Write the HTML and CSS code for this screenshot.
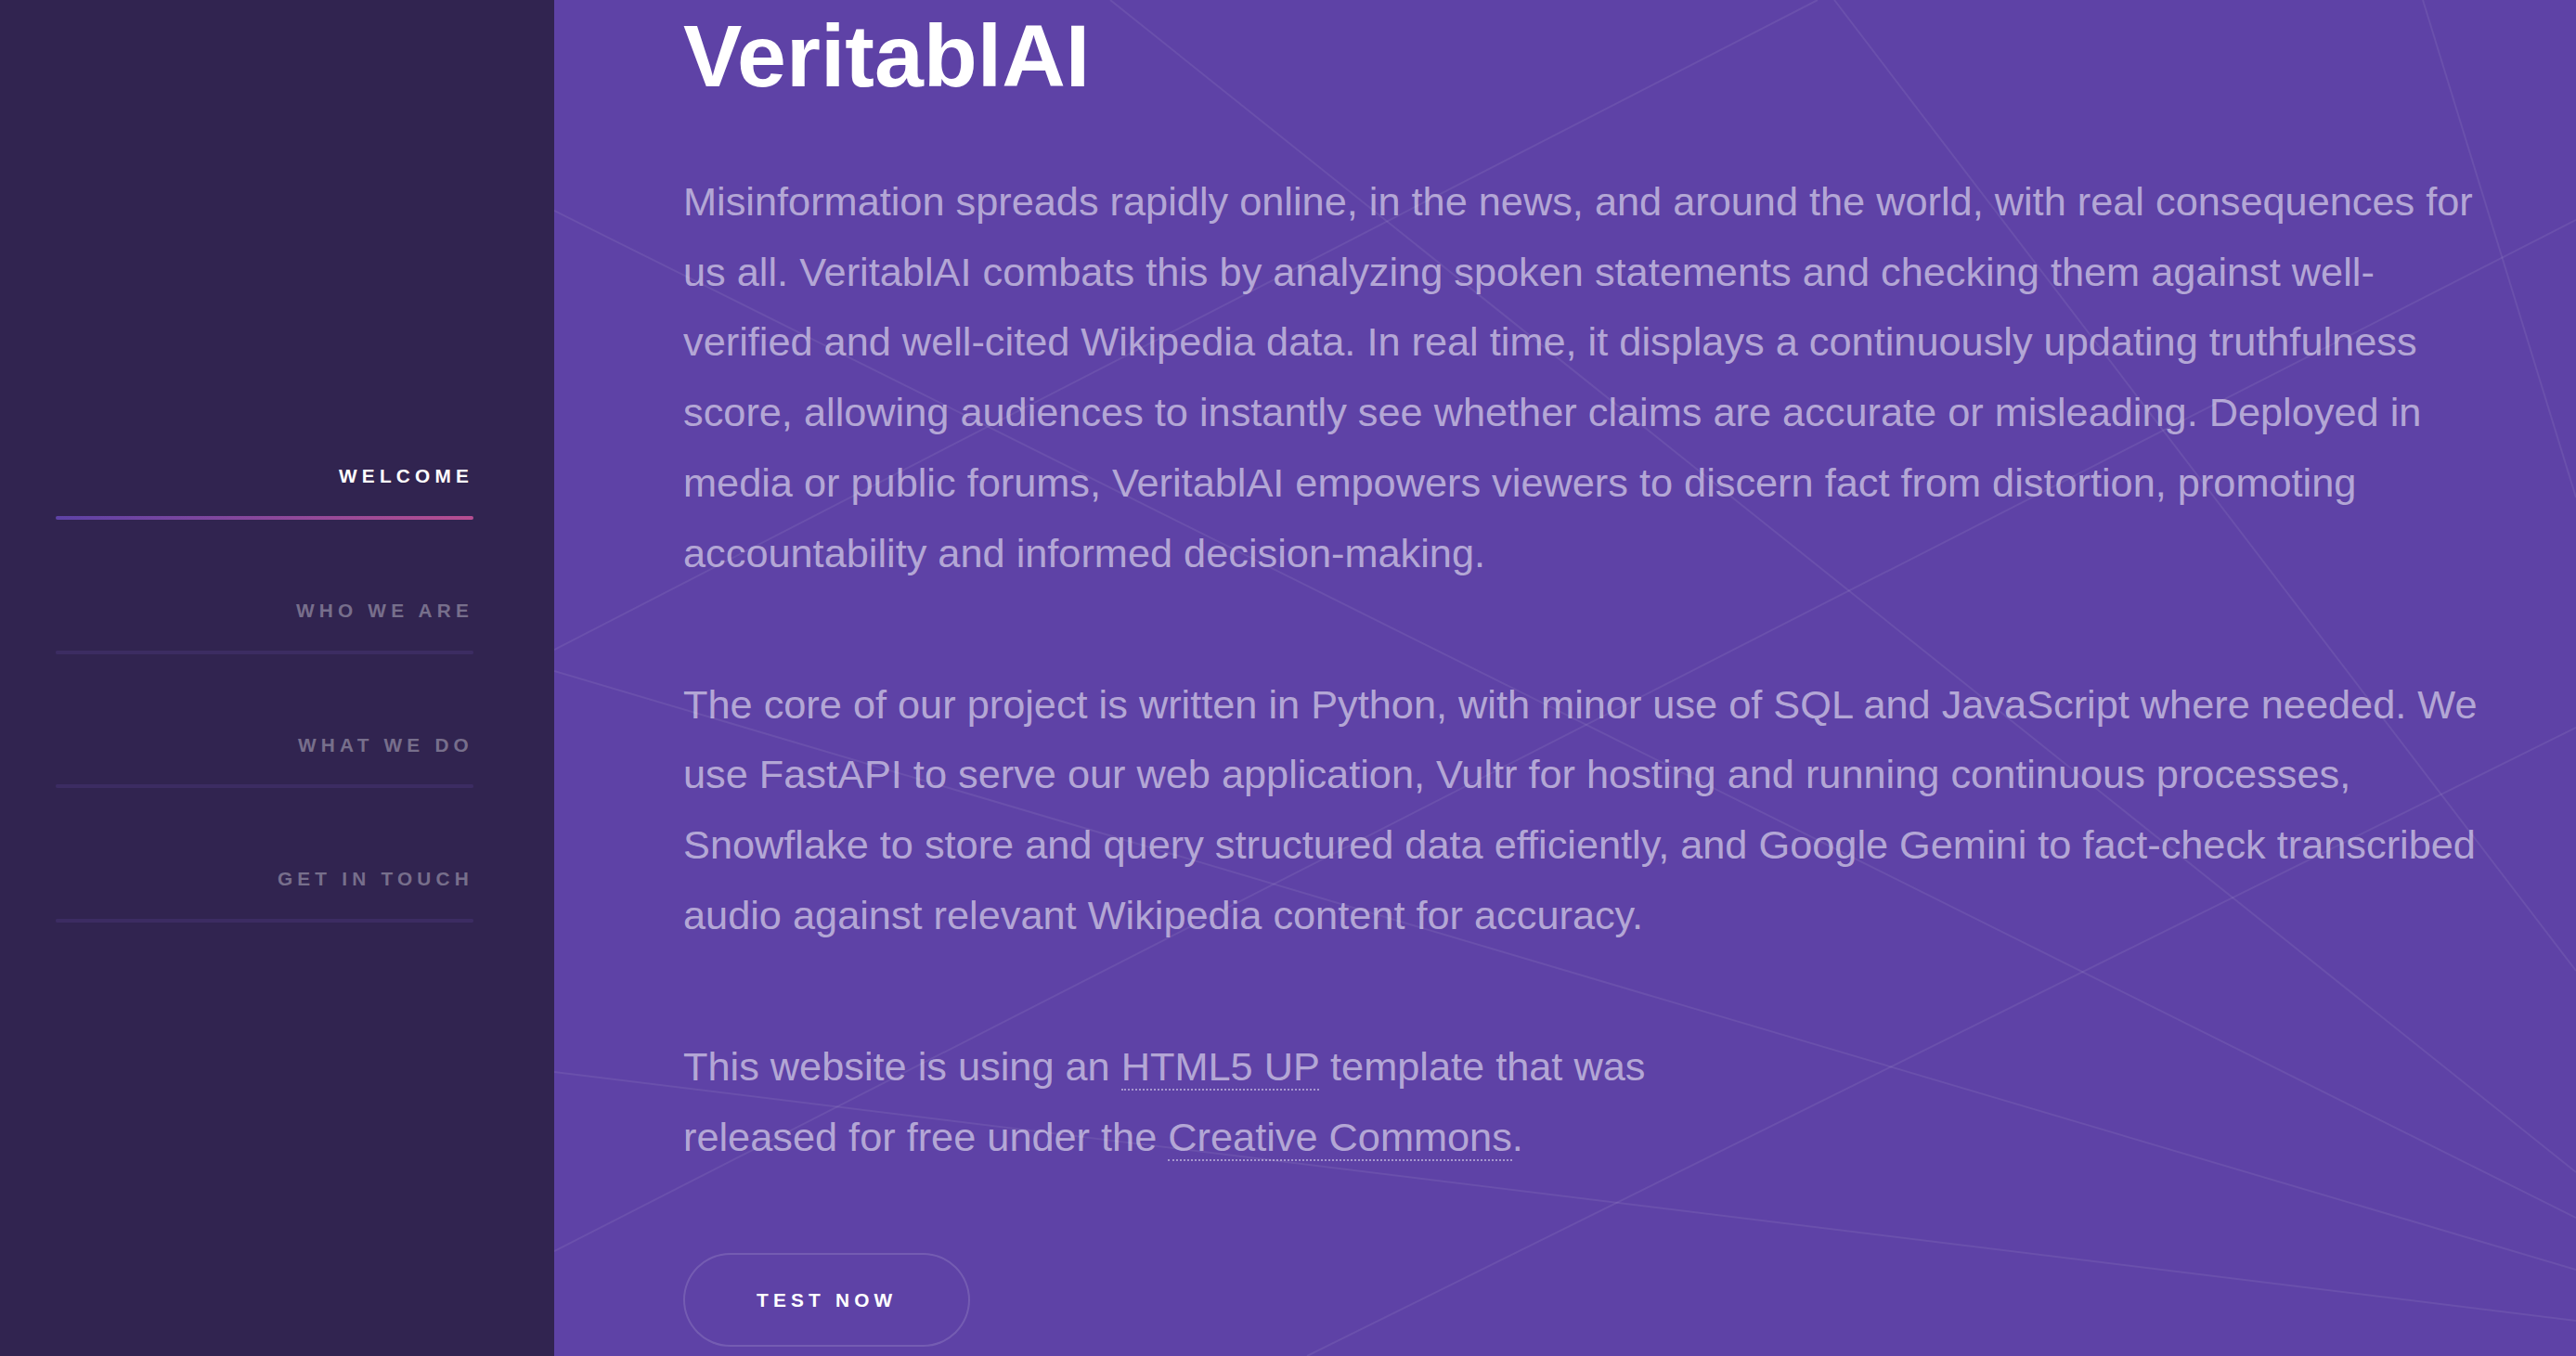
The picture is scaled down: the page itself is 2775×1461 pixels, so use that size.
FILE: index.html
```html
<!DOCTYPE html>
<html lang="en">
<head>
<meta charset="utf-8">
<title>VeritablAI</title>
<link rel="stylesheet" href="styles.css">
</head>
<body>
<div class="page">
  <aside class="sidebar">
    <nav class="nav">
      <ul>
        <li><a href="#intro" class="active">Welcome</a></li>
        <li><a href="#one">Who we are</a></li>
        <li><a href="#two">What we do</a></li>
        <li><a href="#three">Get in touch</a></li>
      </ul>
    </nav>
  </aside>
  <main class="intro" id="intro">
    <svg class="bg-lines" viewBox="597 0 2178 1461" preserveAspectRatio="none" aria-hidden="true">
      <g stroke="rgba(255,255,255,0.075)" stroke-width="2" fill="none">
        <line x1="1976" y1="0" x2="2775" y2="1046"/>
        <line x1="2610" y1="0" x2="2775" y2="536"/>
        <line x1="2775" y1="237" x2="597" y2="1348"/>
        <line x1="597" y1="700" x2="1958" y2="0"/>
        <line x1="597" y1="723" x2="2775" y2="1368"/>
        <line x1="597" y1="1155" x2="2775" y2="1423"/>
        <line x1="2775" y1="784" x2="1408" y2="1461"/>
        <line x1="1196" y1="0" x2="2775" y2="1263"/>
        <line x1="597" y1="227" x2="2775" y2="1312"/>
      </g>
    </svg>
    <div class="inner">
      <h1 class="title">VeritablAI</h1>
      <p class="text">Misinformation spreads rapidly online, in the news, and around the world, with real consequences for us all. VeritablAI combats this by analyzing spoken statements and checking them against well-verified and well-cited Wikipedia data. In real time, it displays a continuously updating truthfulness score, allowing audiences to instantly see whether claims are accurate or misleading. Deployed in media or public forums, VeritablAI empowers viewers to discern fact from distortion, promoting accountability and informed decision-making.</p>
      <p class="text">The core of our project is written in Python, with minor use of SQL and JavaScript where needed. We use FastAPI to serve our web application, Vultr for hosting and running continuous processes, Snowflake to store and query structured data efficiently, and Google Gemini to fact-check transcribed audio against relevant Wikipedia content for accuracy.</p>
      <p class="text">This website is using an <a class="link" href="#">HTML5 UP</a> template that was<br>released for free under the <a class="link" href="#">Creative Commons</a>.</p>
      <a class="button" href="#">Test now</a>
    </div>
  </main>
</div>
</body>
</html>
```

FILE: styles.css
```css
html, body {
  margin: 0;
  padding: 0;
  height: 100%;
  overflow: hidden;
}

body {
  background: #5e42a6;
  font-family: "Liberation Sans", Arial, Helvetica, sans-serif;
}

.page {
  display: flex;
  height: 100vh;
}

.sidebar {
  flex: none;
  width: 597px;
  box-sizing: border-box;
  background: #312450;
  display: flex;
  flex-direction: column;
  justify-content: center;
  padding: 0 87px 0 60px;
}

.nav ul {
  list-style: none;
  margin: 0;
  padding: 0;
}

.nav li {
  margin: 52px 0 0 0;
}

.nav li:first-child {
  margin-top: 0;
}

.nav a {
  display: block;
  position: relative;
  font-size: 20.8px;
  font-weight: bold;
  letter-spacing: 0.25em;
  line-height: 1.75;
  padding: 1.35em 0;
  text-align: right;
  text-transform: uppercase;
  text-decoration: none;
  color: rgba(255, 255, 255, 0.35);
}

.nav a::before,
.nav a::after {
  content: "";
  position: absolute;
  right: 0;
  bottom: 0;
  width: 100%;
  height: 4px;
  border-radius: 4px;
  background: #3c2c62;
}

.nav a.active {
  color: #ffffff;
}

.nav a.active::after {
  background: linear-gradient(to right, #5e42a6, #b74e91);
}

.intro {
  flex: 1;
  position: relative;
  box-sizing: border-box;
  padding: 0 86px 0 139px;
  overflow: hidden;
}

.bg-lines {
  position: absolute;
  left: 0;
  top: 0;
  width: 100%;
  height: 100%;
}

.inner {
  position: relative;
}

.title {
  margin: 0 0 59px 0;
  font-size: 95px;
  line-height: 1.27;
  font-weight: bold;
  color: #ffffff;
}

.text {
  margin: 0 0 2em 0;
  font-size: 43.3px;
  line-height: 1.753;
  color: rgba(255, 255, 255, 0.55);
}

.link {
  color: inherit;
  text-decoration: none;
  border-bottom: 2px dotted rgba(255, 255, 255, 0.45);
}

.button {
  display: inline-block;
  height: 101px;
  line-height: 101px;
  padding: 0 79px;
  border-radius: 51px;
  box-shadow: inset 0 0 0 2px rgba(255, 255, 255, 0.14);
  font-size: 20.8px;
  font-weight: bold;
  letter-spacing: 0.25em;
  text-transform: uppercase;
  text-decoration: none;
  color: #ffffff;
}
```
